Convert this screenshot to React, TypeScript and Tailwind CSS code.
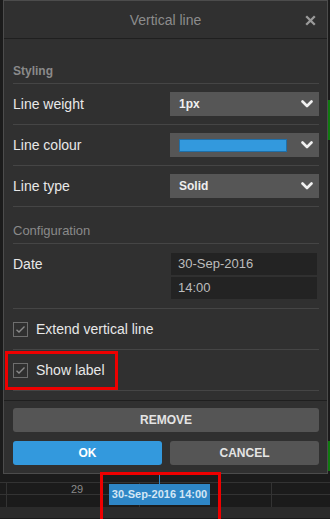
import React from "react";

const Chevron = () => (
  <svg width="12" height="8" viewBox="0 0 12 8" className="shrink-0">
    <path d="M1.5 1.5 L6 6 L10.5 1.5" fill="none" stroke="#f0f0f0" strokeWidth="2.6" strokeLinecap="round" strokeLinejoin="round" />
  </svg>
);

const Check = () => (
  <div className="w-[15px] h-[15px] border border-[#6e6e6e] flex items-center justify-center shrink-0">
    <svg width="11" height="9" viewBox="0 0 11 9">
      <path d="M1.5 4.8 L4 7 L9.5 1.5" fill="none" stroke="#8a8a8a" strokeWidth="1.4" />
    </svg>
  </div>
);

const SelectBox = ({ children }: { children: React.ReactNode }) => (
  <div className="w-[149px] h-[24px] bg-[#565656] flex items-center justify-between pl-[9px] pr-[6px]">
    {children}
    <Chevron />
  </div>
);

const Row = ({ label, children }: { label: string; children: React.ReactNode }) => (
  <div className="flex items-center justify-between py-2 border-b border-[#454545]">
    <span className="text-[14px] text-[#e8e8e8]">{label}</span>
    {children}
  </div>
);

const CheckRow = ({ label }: { label: string }) => (
  <div className="flex items-center gap-[8px] h-[41px] pt-[1px] border-b border-[#454545]">
    <Check />
    <span className="text-[14px] text-[#e8e8e8]">{label}</span>
  </div>
);

export default function App() {
  return (
    <div
      className="relative w-[330px] h-[519px] overflow-hidden bg-[#1b1b1b]"
      style={{ fontFamily: '"Liberation Sans", Arial, sans-serif' }}
    >
      {/* dialog */}
      <div className="ml-[3px] w-[325px] h-[474px] bg-[#303030] border border-[#4c4c4c] flex flex-col">
        <div className="h-[38px] shrink-0 flex items-center justify-center relative border-b border-[#1f1f1f]">
          <span className="text-[14px] text-[#8c8c8c] pt-[1px]">Vertical line</span>
          <svg width="11" height="11" viewBox="0 0 11 11" className="absolute right-[11px] top-[14px]">
            <path d="M1.2 1.2 L9.8 9.8 M9.8 1.2 L1.2 9.8" stroke="#9a9a9a" strokeWidth="2.3" />
          </svg>
        </div>

        <div className="pl-[9px] pr-[8px] pt-[20px] pb-[9px]">
          <div className="h-[25px] flex items-center border-b border-[#454545]">
            <span className="text-[12px] font-bold text-[#8a8a8a]">Styling</span>
          </div>
          <Row label="Line weight">
            <SelectBox>
              <span className="text-[12px] font-bold text-[#f0f0f0]">1px</span>
            </SelectBox>
          </Row>
          <Row label="Line colour">
            <SelectBox>
              <div className="w-[108px] h-[13px] bg-[#3399dd] border border-[#1f6fa8]" />
            </SelectBox>
          </Row>
          <Row label="Line type">
            <SelectBox>
              <span className="text-[12px] font-bold text-[#f0f0f0]">Solid</span>
            </SelectBox>
          </Row>
          <div className="h-[37px] pt-[12px] flex items-center border-b border-[#454545]">
            <span className="text-[13px] text-[#8a8a8a]">Configuration</span>
          </div>
          <div className="flex justify-between pt-[9px] pb-[9px] border-b border-[#454545]">
            <span className="text-[14px] text-[#e8e8e8] leading-[22px]">Date</span>
            <div className="flex flex-col gap-[2px] mr-[2px]">
              <div className="w-[146px] h-[22px] bg-[#232323] text-[13px] text-[#bdbdbd] flex items-center pl-[7px]">30-Sep-2016</div>
              <div className="w-[146px] h-[22px] bg-[#232323] text-[13px] text-[#bdbdbd] flex items-center pl-[7px]">14:00</div>
            </div>
          </div>
          <CheckRow label="Extend vertical line" />
          <CheckRow label="Show label" />
        </div>

        <div className="border-t border-[#1f1f1f] pl-[9px] pr-[8px] pt-[7px] flex flex-col gap-[9px]">
          <div className="h-[24px] rounded-[3px] bg-[#555555] flex items-center justify-center text-[12px] font-bold text-[#e4e4e4]">
            REMOVE
          </div>
          <div className="flex gap-[8px]">
            <div className="flex-1 h-[24px] rounded-[3px] bg-[#3399dd] flex items-center justify-center text-[12px] font-bold text-white">
              OK
            </div>
            <div className="flex-1 h-[24px] rounded-[3px] bg-[#555555] flex items-center justify-center text-[12px] font-bold text-[#e4e4e4]">
              CANCEL
            </div>
          </div>
        </div>
      </div>

      {/* chart strip under the dialog */}
      <div className="h-[9px] border-b border-[#333333]" />
      <div className="h-[12px] border-b border-[#333333] flex">
        <div className="w-[7px] border-r border-[#333333]" />
        <div className="w-[133px] border-r border-[#333333] text-[11px] text-[#8a8a8a] text-center leading-[12px] pl-[8px]">29</div>
        <div className="w-[132px] border-r border-[#333333]" />
      </div>
      <div className="h-[12px] flex">
        <div className="w-[7px] border-r border-[#333333]" />
        <div className="w-[133px] border-r border-[#333333]" />
        <div className="w-[132px] border-r border-[#333333]" />
      </div>
      <div className="h-[11px] bg-[#2b2b2b]" />

      {/* green candle edges on the right */}
      <div className="absolute right-0 top-[100px] w-[2px] h-[40px] bg-[#0f7a0f]" />
      <div className="absolute right-0 top-[441px] w-[2px] h-[30px] bg-[#0f7a0f]" />

      {/* date label tag */}
      <div className="absolute left-[159px] top-[474px] w-[1px] h-[10px] bg-[#2e86c6]" />
      <div className="absolute left-[109px] top-[484px] w-[101px] h-[21px] bg-[#2e86c6] flex items-center justify-center text-[11px] font-bold text-[#d3e6f5]">
        30-Sep-2016 14:00
      </div>

      {/* highlight boxes */}
      <div className="absolute left-[5px] top-[351px] w-[113px] h-[39px] border-[3px] border-[#ee0000]" />
      <div className="absolute left-[100px] top-[472px] w-[121px] h-[50px] border-[3px] border-[#ee0000]" />
    </div>
  );
}
